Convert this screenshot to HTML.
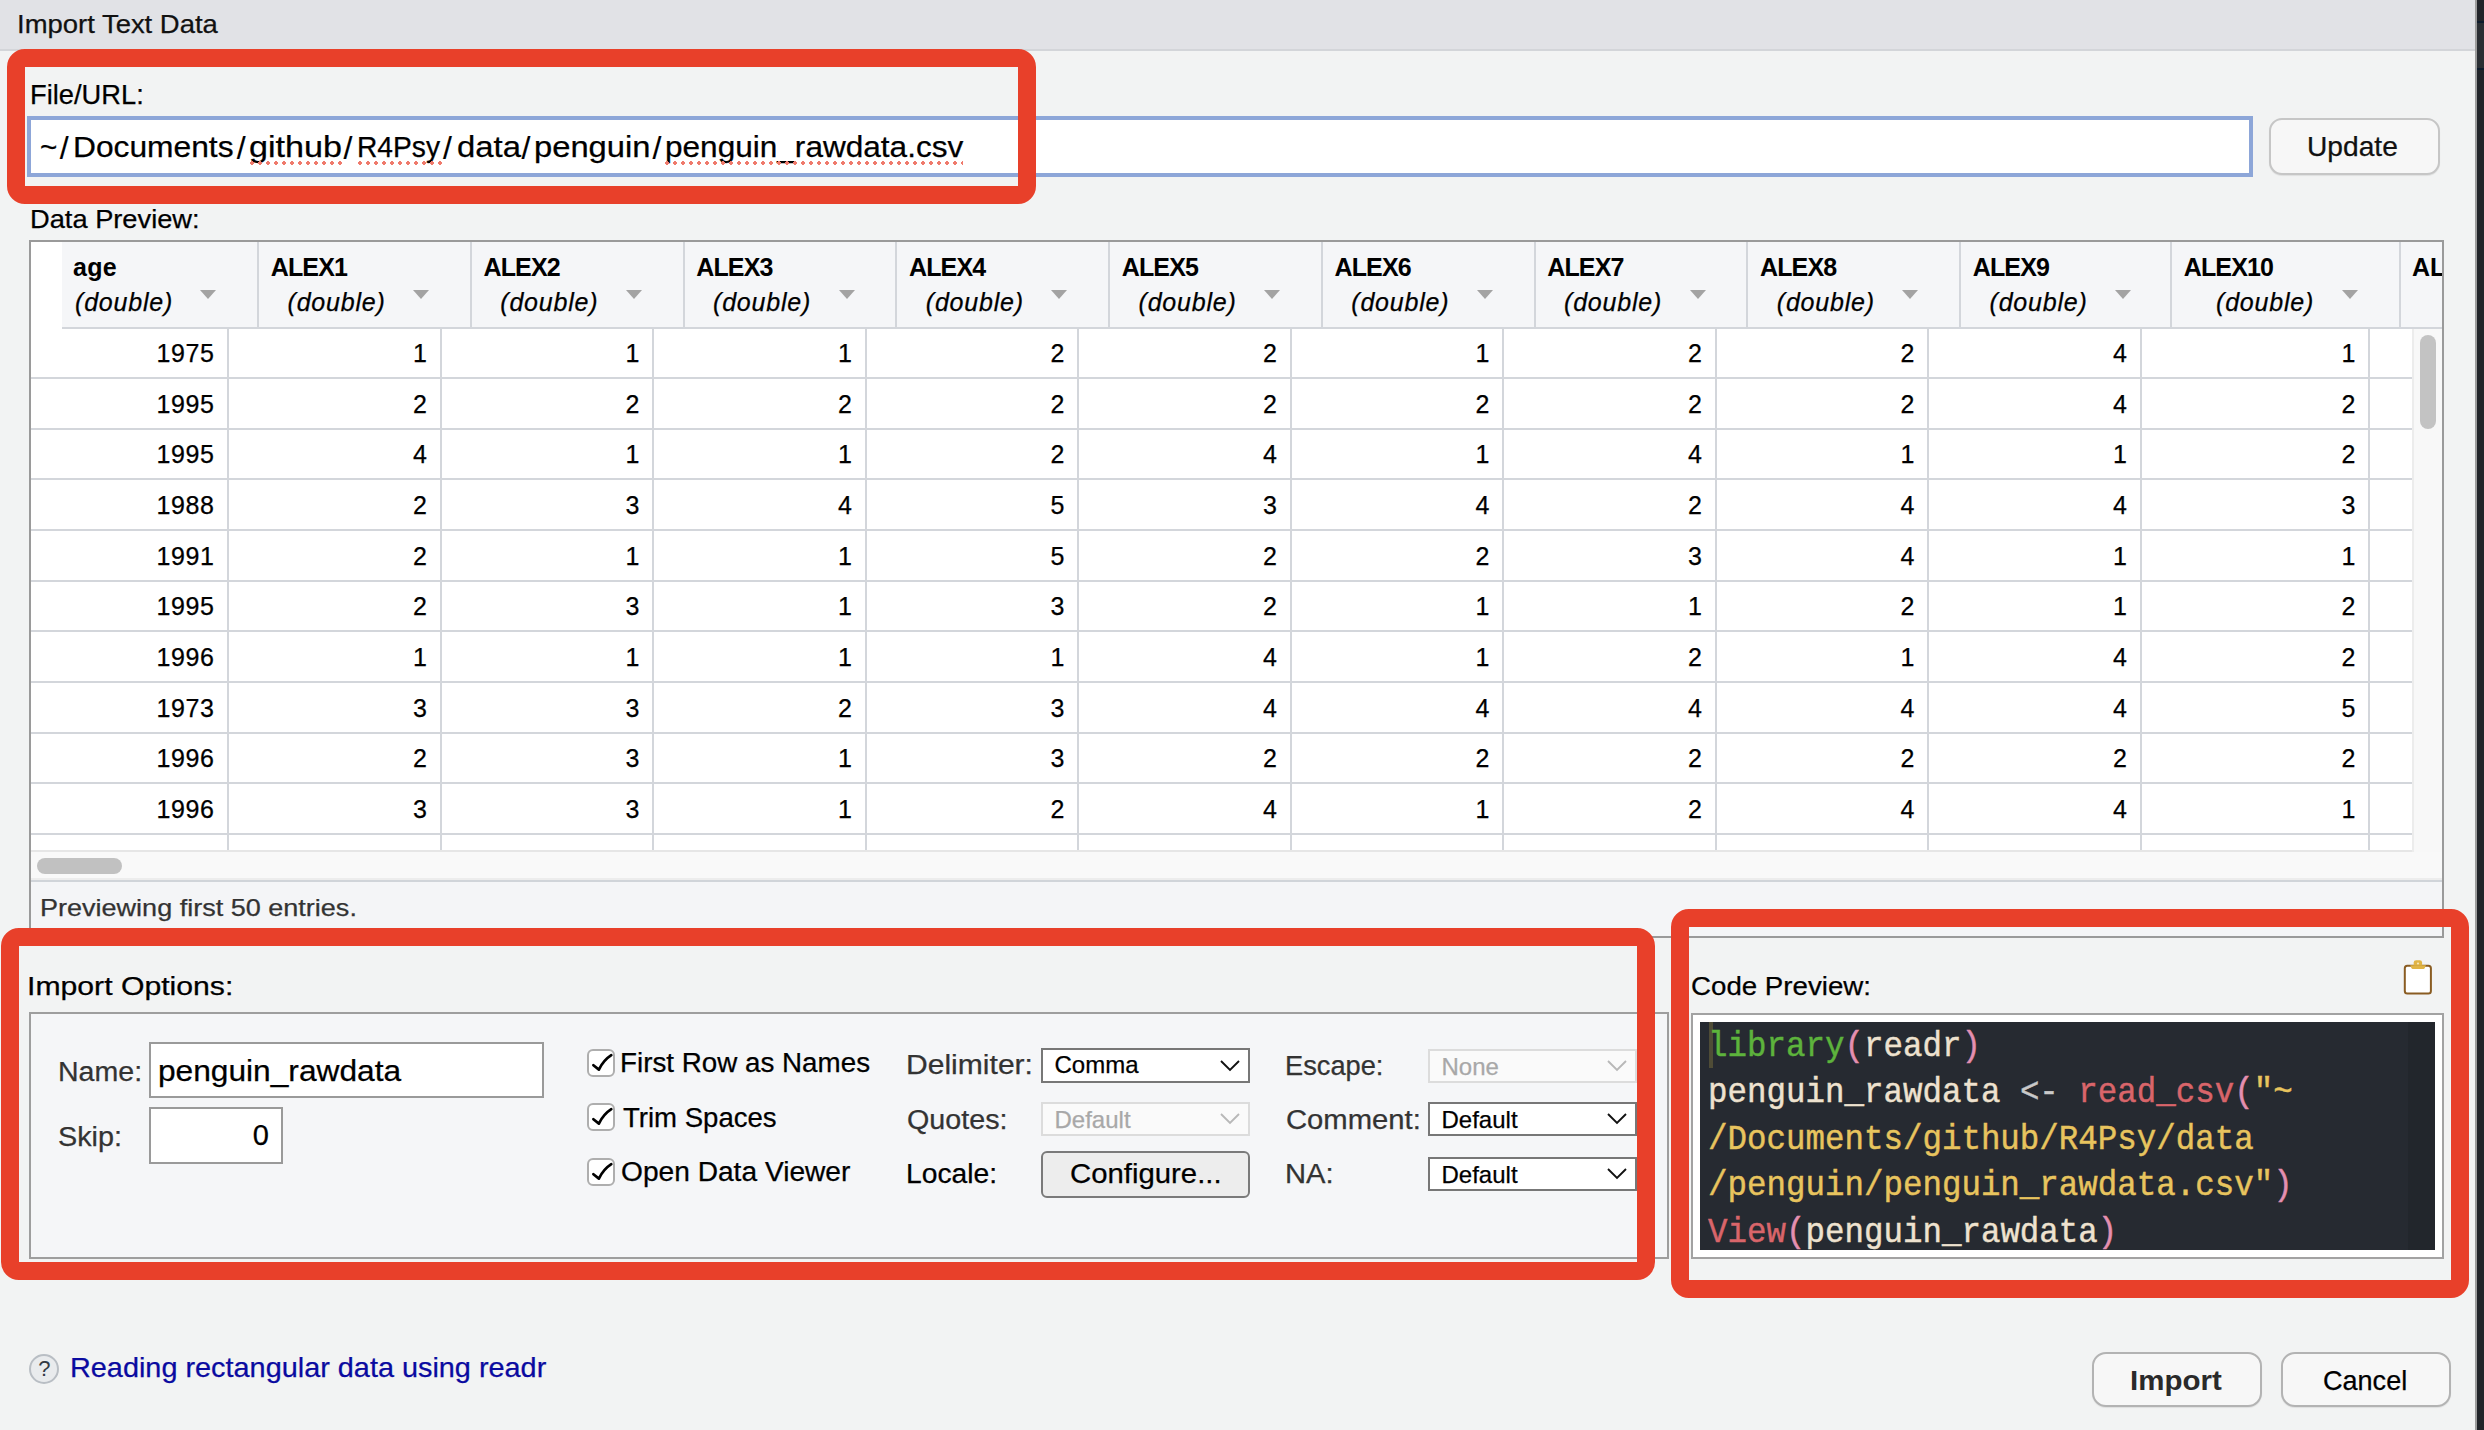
<!DOCTYPE html>
<html><head><meta charset="utf-8"><title>Import Text Data</title>
<style>
html,body{margin:0;padding:0;}
body{width:2484px;height:1430px;overflow:hidden;background:#f2f3f3;position:relative;font-family:'Liberation Sans', sans-serif;}
body div, body svg{position:absolute;white-space:nowrap;}
.t{-webkit-text-stroke:0.35px currentColor;}
body span{position:static;}
</style></head><body>
<div style="left:0px;top:0px;width:2475px;height:49px;background:#e1e2e6"></div>
<div style="left:0px;top:49px;width:2475px;height:2px;background:#d3d5d9"></div>
<div style="left:2475px;top:0px;width:2px;height:1430px;background:#9c9c9c"></div>
<div style="left:2477px;top:0px;width:7px;height:1430px;background:#212429"></div>
<div style="left:2477px;top:21px;width:7px;height:2px;background:#0d1b2c"></div>
<div style="left:2477px;top:23px;width:7px;height:45px;background:#2a2e33"></div>
<div style="left:2477px;top:68px;width:7px;height:2px;background:#0d1b2c"></div>
<div style="left:16.89px;top:11.1px;font-family:'Liberation Sans', sans-serif;font-size:26px;line-height:26px;color:#111;font-weight:normal;letter-spacing:0px;-webkit-text-stroke:0.25px #111;transform:scaleX(1.0556);transform-origin:0 0;">Import Text Data</div>
<div style="left:30.2px;top:80.5px;font-family:'Liberation Sans', sans-serif;font-size:28px;line-height:28px;color:#000;font-weight:normal;letter-spacing:0px;-webkit-text-stroke:0.25px #000;transform:scaleX(0.975);transform-origin:0 0;">File/URL:</div>
<div style="left:27px;top:116px;width:2226px;height:61px;background:#fff;box-sizing:border-box;border:4px solid #8da6d8"></div>
<div style="left:40.08px;top:132.8px;font-family:'Liberation Sans', sans-serif;font-size:29px;line-height:29px;color:#000;font-weight:normal;letter-spacing:0px;-webkit-text-stroke:0.25px #000;transform:scaleX(1.02);transform-origin:0 0;">~</div>
<div style="left:72.51px;top:132.8px;font-family:'Liberation Sans', sans-serif;font-size:29px;line-height:29px;color:#000;font-weight:normal;letter-spacing:0px;-webkit-text-stroke:0.25px #000;transform:scaleX(1.0944);transform-origin:0 0;">Documents</div>
<div style="left:249.22px;top:132.8px;font-family:'Liberation Sans', sans-serif;font-size:29px;line-height:29px;color:#000;font-weight:normal;letter-spacing:0px;-webkit-text-stroke:0.25px #000;transform:scaleX(1.1766);transform-origin:0 0;">github</div>
<div style="left:357.06px;top:132.8px;font-family:'Liberation Sans', sans-serif;font-size:29px;line-height:29px;color:#000;font-weight:normal;letter-spacing:0px;-webkit-text-stroke:0.25px #000;transform:scaleX(0.9714);transform-origin:0 0;">R4Psy</div>
<div style="left:456.57px;top:132.8px;font-family:'Liberation Sans', sans-serif;font-size:29px;line-height:29px;color:#000;font-weight:normal;letter-spacing:0px;-webkit-text-stroke:0.25px #000;transform:scaleX(1.1321);transform-origin:0 0;">data</div>
<div style="left:533.94px;top:132.8px;font-family:'Liberation Sans', sans-serif;font-size:29px;line-height:29px;color:#000;font-weight:normal;letter-spacing:0px;-webkit-text-stroke:0.25px #000;transform:scaleX(1.128);transform-origin:0 0;">penguin</div>
<div style="left:664.82px;top:132.8px;font-family:'Liberation Sans', sans-serif;font-size:29px;line-height:29px;color:#000;font-weight:normal;letter-spacing:0px;-webkit-text-stroke:0.25px #000;transform:scaleX(1.0882);transform-origin:0 0;">penguin_rawdata.csv</div>
<div style="left:59.7px;top:132.3px;font-family:'Liberation Sans', sans-serif;font-size:32px;line-height:32px;color:#000;font-weight:normal;letter-spacing:0px;-webkit-text-stroke:0.15px #000;">/</div>
<div style="left:236.8px;top:132.3px;font-family:'Liberation Sans', sans-serif;font-size:32px;line-height:32px;color:#000;font-weight:normal;letter-spacing:0px;-webkit-text-stroke:0.15px #000;">/</div>
<div style="left:343.5px;top:132.3px;font-family:'Liberation Sans', sans-serif;font-size:32px;line-height:32px;color:#000;font-weight:normal;letter-spacing:0px;-webkit-text-stroke:0.15px #000;">/</div>
<div style="left:443.1px;top:132.3px;font-family:'Liberation Sans', sans-serif;font-size:32px;line-height:32px;color:#000;font-weight:normal;letter-spacing:0px;-webkit-text-stroke:0.15px #000;">/</div>
<div style="left:521.5px;top:132.3px;font-family:'Liberation Sans', sans-serif;font-size:32px;line-height:32px;color:#000;font-weight:normal;letter-spacing:0px;-webkit-text-stroke:0.15px #000;">/</div>
<div style="left:652.5px;top:132.3px;font-family:'Liberation Sans', sans-serif;font-size:32px;line-height:32px;color:#000;font-weight:normal;letter-spacing:0px;-webkit-text-stroke:0.15px #000;">/</div>
<div style="left:250px;top:160.5px;width:92px;height:4px;background-image:radial-gradient(circle at 2px 2px,#ef7a6c 1.6px,transparent 2.1px);background-size:8px 4px;"></div>
<div style="left:358px;top:160.5px;width:84px;height:4px;background-image:radial-gradient(circle at 2px 2px,#ef7a6c 1.6px,transparent 2.1px);background-size:8px 4px;"></div>
<div style="left:665px;top:160.5px;width:298px;height:4px;background-image:radial-gradient(circle at 2px 2px,#ef7a6c 1.6px,transparent 2.1px);background-size:8px 4px;"></div>
<div style="left:2269px;top:118px;width:171px;height:57px;box-sizing:border-box;border:2px solid #c6c6c6;border-radius:13px;background:#f7f7f7;box-shadow:0 1px 1px rgba(0,0,0,0.08)"></div>
<div style="left:2307.49px;top:132.6px;font-family:'Liberation Sans', sans-serif;font-size:28px;line-height:28px;color:#111;font-weight:normal;letter-spacing:0px;-webkit-text-stroke:0.25px #111;transform:scaleX(1.0057);transform-origin:0 0;">Update</div>
<div style="left:29.6px;top:205.6px;font-family:'Liberation Sans', sans-serif;font-size:26px;line-height:26px;color:#000;font-weight:normal;letter-spacing:0px;-webkit-text-stroke:0.25px #000;transform:scaleX(1.048);transform-origin:0 0;">Data Preview:</div>
<div style="left:29px;top:240px;width:2415px;height:698px;background:#f4f5f7;box-sizing:border-box;border:2px solid #9a9a9a"></div>
<div style="left:31px;top:328px;width:2382px;height:522px;background:#fff"></div>
<div style="left:31px;top:242px;width:31px;height:86px;background:#fff"></div>
<div style="left:62px;top:242px;width:2380px;height:85px;background:#f5f6f8"></div>
<div style="left:62px;top:327px;width:2380px;height:2px;background:#d3d6db"></div>
<div style="left:257.00px;top:242px;width:2px;height:86px;background:#d3d6db"></div>
<div style="left:469.75px;top:242px;width:2px;height:86px;background:#d3d6db"></div>
<div style="left:682.50px;top:242px;width:2px;height:86px;background:#d3d6db"></div>
<div style="left:895.25px;top:242px;width:2px;height:86px;background:#d3d6db"></div>
<div style="left:1108.00px;top:242px;width:2px;height:86px;background:#d3d6db"></div>
<div style="left:1320.75px;top:242px;width:2px;height:86px;background:#d3d6db"></div>
<div style="left:1533.50px;top:242px;width:2px;height:86px;background:#d3d6db"></div>
<div style="left:1746.25px;top:242px;width:2px;height:86px;background:#d3d6db"></div>
<div style="left:1959.00px;top:242px;width:2px;height:86px;background:#d3d6db"></div>
<div style="left:2170.00px;top:242px;width:2px;height:86px;background:#d3d6db"></div>
<div style="left:2399.00px;top:242px;width:2px;height:86px;background:#d3d6db"></div>
<div style="left:227.00px;top:329px;width:2px;height:521px;background:#d3d6db"></div>
<div style="left:439.50px;top:329px;width:2px;height:521px;background:#d3d6db"></div>
<div style="left:652.00px;top:329px;width:2px;height:521px;background:#d3d6db"></div>
<div style="left:864.50px;top:329px;width:2px;height:521px;background:#d3d6db"></div>
<div style="left:1077.00px;top:329px;width:2px;height:521px;background:#d3d6db"></div>
<div style="left:1289.50px;top:329px;width:2px;height:521px;background:#d3d6db"></div>
<div style="left:1502.00px;top:329px;width:2px;height:521px;background:#d3d6db"></div>
<div style="left:1714.50px;top:329px;width:2px;height:521px;background:#d3d6db"></div>
<div style="left:1927.00px;top:329px;width:2px;height:521px;background:#d3d6db"></div>
<div style="left:2139.50px;top:329px;width:2px;height:521px;background:#d3d6db"></div>
<div style="left:2368.00px;top:329px;width:2px;height:521px;background:#d3d6db"></div>
<div style="left:31px;top:377.00px;width:2382px;height:2px;background:#d3d6db"></div>
<div style="left:31px;top:427.66px;width:2382px;height:2px;background:#d3d6db"></div>
<div style="left:31px;top:478.32px;width:2382px;height:2px;background:#d3d6db"></div>
<div style="left:31px;top:528.98px;width:2382px;height:2px;background:#d3d6db"></div>
<div style="left:31px;top:579.64px;width:2382px;height:2px;background:#d3d6db"></div>
<div style="left:31px;top:630.30px;width:2382px;height:2px;background:#d3d6db"></div>
<div style="left:31px;top:680.96px;width:2382px;height:2px;background:#d3d6db"></div>
<div style="left:31px;top:731.62px;width:2382px;height:2px;background:#d3d6db"></div>
<div style="left:31px;top:782.28px;width:2382px;height:2px;background:#d3d6db"></div>
<div style="left:31px;top:832.94px;width:2382px;height:2px;background:#d3d6db"></div>
<div style="left:31px;top:850px;width:2382px;height:2px;background:#e6e6e6"></div>
<div style="left:31px;top:852px;width:2411px;height:28px;background:#f9f9f9"></div>
<div style="left:31px;top:878px;width:2411px;height:2px;background:#ededed"></div>
<div style="left:2413px;top:329px;width:29px;height:523px;background:#f8f8f8"></div>
<div style="left:2412px;top:329px;width:2px;height:523px;background:#ececec"></div>
<div style="left:31px;top:880px;width:2411px;height:2px;background:#d0d4d9"></div>
<div style="left:37px;top:858px;width:85px;height:16px;border-radius:8px;background:#c1c1c1"></div>
<div style="left:2420px;top:335px;width:16px;height:94px;border-radius:8px;background:#c3c3c3"></div>
<div style="left:73px;top:254.9px;font-family:'Liberation Sans', sans-serif;font-size:25px;line-height:25px;color:#000;font-weight:bold;letter-spacing:0.3px;">age</div>
<div style="left:75px;top:289.9px;font-family:'Liberation Sans', sans-serif;font-size:25px;line-height:25px;color:#000;font-weight:normal;letter-spacing:0.8px;-webkit-text-stroke:0.25px #000;font-style:italic;">(double)</div>
<div style="left:200.0px;top:290px;width:0;height:0;border-left:8px solid transparent;border-right:8px solid transparent;border-top:9px solid #a3a3a3"></div>
<div style="left:270.7px;top:255.2px;font-family:'Liberation Sans', sans-serif;font-size:25px;line-height:25px;color:#000;font-weight:bold;letter-spacing:-0.85px;">ALEX1</div>
<div style="left:287.5px;top:289.9px;font-family:'Liberation Sans', sans-serif;font-size:25px;line-height:25px;color:#000;font-weight:normal;letter-spacing:0.8px;-webkit-text-stroke:0.25px #000;font-style:italic;">(double)</div>
<div style="left:413.0px;top:290px;width:0;height:0;border-left:8px solid transparent;border-right:8px solid transparent;border-top:9px solid #a3a3a3"></div>
<div style="left:483.45px;top:255.2px;font-family:'Liberation Sans', sans-serif;font-size:25px;line-height:25px;color:#000;font-weight:bold;letter-spacing:-0.85px;">ALEX2</div>
<div style="left:500.25px;top:289.9px;font-family:'Liberation Sans', sans-serif;font-size:25px;line-height:25px;color:#000;font-weight:normal;letter-spacing:0.8px;-webkit-text-stroke:0.25px #000;font-style:italic;">(double)</div>
<div style="left:625.8px;top:290px;width:0;height:0;border-left:8px solid transparent;border-right:8px solid transparent;border-top:9px solid #a3a3a3"></div>
<div style="left:696.2px;top:255.2px;font-family:'Liberation Sans', sans-serif;font-size:25px;line-height:25px;color:#000;font-weight:bold;letter-spacing:-0.85px;">ALEX3</div>
<div style="left:713.0px;top:289.9px;font-family:'Liberation Sans', sans-serif;font-size:25px;line-height:25px;color:#000;font-weight:normal;letter-spacing:0.8px;-webkit-text-stroke:0.25px #000;font-style:italic;">(double)</div>
<div style="left:838.5px;top:290px;width:0;height:0;border-left:8px solid transparent;border-right:8px solid transparent;border-top:9px solid #a3a3a3"></div>
<div style="left:908.95px;top:255.2px;font-family:'Liberation Sans', sans-serif;font-size:25px;line-height:25px;color:#000;font-weight:bold;letter-spacing:-0.85px;">ALEX4</div>
<div style="left:925.75px;top:289.9px;font-family:'Liberation Sans', sans-serif;font-size:25px;line-height:25px;color:#000;font-weight:normal;letter-spacing:0.8px;-webkit-text-stroke:0.25px #000;font-style:italic;">(double)</div>
<div style="left:1051.2px;top:290px;width:0;height:0;border-left:8px solid transparent;border-right:8px solid transparent;border-top:9px solid #a3a3a3"></div>
<div style="left:1121.7px;top:255.2px;font-family:'Liberation Sans', sans-serif;font-size:25px;line-height:25px;color:#000;font-weight:bold;letter-spacing:-0.85px;">ALEX5</div>
<div style="left:1138.5px;top:289.9px;font-family:'Liberation Sans', sans-serif;font-size:25px;line-height:25px;color:#000;font-weight:normal;letter-spacing:0.8px;-webkit-text-stroke:0.25px #000;font-style:italic;">(double)</div>
<div style="left:1264.0px;top:290px;width:0;height:0;border-left:8px solid transparent;border-right:8px solid transparent;border-top:9px solid #a3a3a3"></div>
<div style="left:1334.45px;top:255.2px;font-family:'Liberation Sans', sans-serif;font-size:25px;line-height:25px;color:#000;font-weight:bold;letter-spacing:-0.85px;">ALEX6</div>
<div style="left:1351.25px;top:289.9px;font-family:'Liberation Sans', sans-serif;font-size:25px;line-height:25px;color:#000;font-weight:normal;letter-spacing:0.8px;-webkit-text-stroke:0.25px #000;font-style:italic;">(double)</div>
<div style="left:1476.8px;top:290px;width:0;height:0;border-left:8px solid transparent;border-right:8px solid transparent;border-top:9px solid #a3a3a3"></div>
<div style="left:1547.2px;top:255.2px;font-family:'Liberation Sans', sans-serif;font-size:25px;line-height:25px;color:#000;font-weight:bold;letter-spacing:-0.85px;">ALEX7</div>
<div style="left:1564.0px;top:289.9px;font-family:'Liberation Sans', sans-serif;font-size:25px;line-height:25px;color:#000;font-weight:normal;letter-spacing:0.8px;-webkit-text-stroke:0.25px #000;font-style:italic;">(double)</div>
<div style="left:1689.5px;top:290px;width:0;height:0;border-left:8px solid transparent;border-right:8px solid transparent;border-top:9px solid #a3a3a3"></div>
<div style="left:1759.95px;top:255.2px;font-family:'Liberation Sans', sans-serif;font-size:25px;line-height:25px;color:#000;font-weight:bold;letter-spacing:-0.85px;">ALEX8</div>
<div style="left:1776.75px;top:289.9px;font-family:'Liberation Sans', sans-serif;font-size:25px;line-height:25px;color:#000;font-weight:normal;letter-spacing:0.8px;-webkit-text-stroke:0.25px #000;font-style:italic;">(double)</div>
<div style="left:1902.2px;top:290px;width:0;height:0;border-left:8px solid transparent;border-right:8px solid transparent;border-top:9px solid #a3a3a3"></div>
<div style="left:1972.7px;top:255.2px;font-family:'Liberation Sans', sans-serif;font-size:25px;line-height:25px;color:#000;font-weight:bold;letter-spacing:-0.85px;">ALEX9</div>
<div style="left:1989.5px;top:289.9px;font-family:'Liberation Sans', sans-serif;font-size:25px;line-height:25px;color:#000;font-weight:normal;letter-spacing:0.8px;-webkit-text-stroke:0.25px #000;font-style:italic;">(double)</div>
<div style="left:2115.0px;top:290px;width:0;height:0;border-left:8px solid transparent;border-right:8px solid transparent;border-top:9px solid #a3a3a3"></div>
<div style="left:2183.7px;top:255.2px;font-family:'Liberation Sans', sans-serif;font-size:25px;line-height:25px;color:#000;font-weight:bold;letter-spacing:-0.85px;">ALEX10</div>
<div style="left:2216px;top:289.9px;font-family:'Liberation Sans', sans-serif;font-size:25px;line-height:25px;color:#000;font-weight:normal;letter-spacing:0.8px;-webkit-text-stroke:0.25px #000;font-style:italic;">(double)</div>
<div style="left:2342.0px;top:290px;width:0;height:0;border-left:8px solid transparent;border-right:8px solid transparent;border-top:9px solid #a3a3a3"></div>
<div style="left:2400px;top:242px;width:42px;height:86px;overflow:hidden"><div style="left:12px;top:12.9px;font-family:'Liberation Sans', sans-serif;font-size:25px;line-height:25px;font-weight:bold">ALEX11</div></div>
<div style="right:2269.5px;top:340.9px;font-family:'Liberation Sans', sans-serif;font-size:25px;line-height:25px;color:#000;font-weight:normal;letter-spacing:0.6px;-webkit-text-stroke:0.25px #000;">1975</div>
<div style="right:2057.0px;top:340.9px;font-family:'Liberation Sans', sans-serif;font-size:25px;line-height:25px;color:#000;font-weight:normal;letter-spacing:0px;-webkit-text-stroke:0.25px #000;">1</div>
<div style="right:1844.5px;top:340.9px;font-family:'Liberation Sans', sans-serif;font-size:25px;line-height:25px;color:#000;font-weight:normal;letter-spacing:0px;-webkit-text-stroke:0.25px #000;">1</div>
<div style="right:1632.0px;top:340.9px;font-family:'Liberation Sans', sans-serif;font-size:25px;line-height:25px;color:#000;font-weight:normal;letter-spacing:0px;-webkit-text-stroke:0.25px #000;">1</div>
<div style="right:1419.5px;top:340.9px;font-family:'Liberation Sans', sans-serif;font-size:25px;line-height:25px;color:#000;font-weight:normal;letter-spacing:0px;-webkit-text-stroke:0.25px #000;">2</div>
<div style="right:1207.0px;top:340.9px;font-family:'Liberation Sans', sans-serif;font-size:25px;line-height:25px;color:#000;font-weight:normal;letter-spacing:0px;-webkit-text-stroke:0.25px #000;">2</div>
<div style="right:994.5px;top:340.9px;font-family:'Liberation Sans', sans-serif;font-size:25px;line-height:25px;color:#000;font-weight:normal;letter-spacing:0px;-webkit-text-stroke:0.25px #000;">1</div>
<div style="right:782.0px;top:340.9px;font-family:'Liberation Sans', sans-serif;font-size:25px;line-height:25px;color:#000;font-weight:normal;letter-spacing:0px;-webkit-text-stroke:0.25px #000;">2</div>
<div style="right:569.5px;top:340.9px;font-family:'Liberation Sans', sans-serif;font-size:25px;line-height:25px;color:#000;font-weight:normal;letter-spacing:0px;-webkit-text-stroke:0.25px #000;">2</div>
<div style="right:357.0px;top:340.9px;font-family:'Liberation Sans', sans-serif;font-size:25px;line-height:25px;color:#000;font-weight:normal;letter-spacing:0px;-webkit-text-stroke:0.25px #000;">4</div>
<div style="right:128.5px;top:340.9px;font-family:'Liberation Sans', sans-serif;font-size:25px;line-height:25px;color:#000;font-weight:normal;letter-spacing:0px;-webkit-text-stroke:0.25px #000;">1</div>
<div style="right:2269.5px;top:391.6px;font-family:'Liberation Sans', sans-serif;font-size:25px;line-height:25px;color:#000;font-weight:normal;letter-spacing:0.6px;-webkit-text-stroke:0.25px #000;">1995</div>
<div style="right:2057.0px;top:391.6px;font-family:'Liberation Sans', sans-serif;font-size:25px;line-height:25px;color:#000;font-weight:normal;letter-spacing:0px;-webkit-text-stroke:0.25px #000;">2</div>
<div style="right:1844.5px;top:391.6px;font-family:'Liberation Sans', sans-serif;font-size:25px;line-height:25px;color:#000;font-weight:normal;letter-spacing:0px;-webkit-text-stroke:0.25px #000;">2</div>
<div style="right:1632.0px;top:391.6px;font-family:'Liberation Sans', sans-serif;font-size:25px;line-height:25px;color:#000;font-weight:normal;letter-spacing:0px;-webkit-text-stroke:0.25px #000;">2</div>
<div style="right:1419.5px;top:391.6px;font-family:'Liberation Sans', sans-serif;font-size:25px;line-height:25px;color:#000;font-weight:normal;letter-spacing:0px;-webkit-text-stroke:0.25px #000;">2</div>
<div style="right:1207.0px;top:391.6px;font-family:'Liberation Sans', sans-serif;font-size:25px;line-height:25px;color:#000;font-weight:normal;letter-spacing:0px;-webkit-text-stroke:0.25px #000;">2</div>
<div style="right:994.5px;top:391.6px;font-family:'Liberation Sans', sans-serif;font-size:25px;line-height:25px;color:#000;font-weight:normal;letter-spacing:0px;-webkit-text-stroke:0.25px #000;">2</div>
<div style="right:782.0px;top:391.6px;font-family:'Liberation Sans', sans-serif;font-size:25px;line-height:25px;color:#000;font-weight:normal;letter-spacing:0px;-webkit-text-stroke:0.25px #000;">2</div>
<div style="right:569.5px;top:391.6px;font-family:'Liberation Sans', sans-serif;font-size:25px;line-height:25px;color:#000;font-weight:normal;letter-spacing:0px;-webkit-text-stroke:0.25px #000;">2</div>
<div style="right:357.0px;top:391.6px;font-family:'Liberation Sans', sans-serif;font-size:25px;line-height:25px;color:#000;font-weight:normal;letter-spacing:0px;-webkit-text-stroke:0.25px #000;">4</div>
<div style="right:128.5px;top:391.6px;font-family:'Liberation Sans', sans-serif;font-size:25px;line-height:25px;color:#000;font-weight:normal;letter-spacing:0px;-webkit-text-stroke:0.25px #000;">2</div>
<div style="right:2269.5px;top:442.3px;font-family:'Liberation Sans', sans-serif;font-size:25px;line-height:25px;color:#000;font-weight:normal;letter-spacing:0.6px;-webkit-text-stroke:0.25px #000;">1995</div>
<div style="right:2057.0px;top:442.3px;font-family:'Liberation Sans', sans-serif;font-size:25px;line-height:25px;color:#000;font-weight:normal;letter-spacing:0px;-webkit-text-stroke:0.25px #000;">4</div>
<div style="right:1844.5px;top:442.3px;font-family:'Liberation Sans', sans-serif;font-size:25px;line-height:25px;color:#000;font-weight:normal;letter-spacing:0px;-webkit-text-stroke:0.25px #000;">1</div>
<div style="right:1632.0px;top:442.3px;font-family:'Liberation Sans', sans-serif;font-size:25px;line-height:25px;color:#000;font-weight:normal;letter-spacing:0px;-webkit-text-stroke:0.25px #000;">1</div>
<div style="right:1419.5px;top:442.3px;font-family:'Liberation Sans', sans-serif;font-size:25px;line-height:25px;color:#000;font-weight:normal;letter-spacing:0px;-webkit-text-stroke:0.25px #000;">2</div>
<div style="right:1207.0px;top:442.3px;font-family:'Liberation Sans', sans-serif;font-size:25px;line-height:25px;color:#000;font-weight:normal;letter-spacing:0px;-webkit-text-stroke:0.25px #000;">4</div>
<div style="right:994.5px;top:442.3px;font-family:'Liberation Sans', sans-serif;font-size:25px;line-height:25px;color:#000;font-weight:normal;letter-spacing:0px;-webkit-text-stroke:0.25px #000;">1</div>
<div style="right:782.0px;top:442.3px;font-family:'Liberation Sans', sans-serif;font-size:25px;line-height:25px;color:#000;font-weight:normal;letter-spacing:0px;-webkit-text-stroke:0.25px #000;">4</div>
<div style="right:569.5px;top:442.3px;font-family:'Liberation Sans', sans-serif;font-size:25px;line-height:25px;color:#000;font-weight:normal;letter-spacing:0px;-webkit-text-stroke:0.25px #000;">1</div>
<div style="right:357.0px;top:442.3px;font-family:'Liberation Sans', sans-serif;font-size:25px;line-height:25px;color:#000;font-weight:normal;letter-spacing:0px;-webkit-text-stroke:0.25px #000;">1</div>
<div style="right:128.5px;top:442.3px;font-family:'Liberation Sans', sans-serif;font-size:25px;line-height:25px;color:#000;font-weight:normal;letter-spacing:0px;-webkit-text-stroke:0.25px #000;">2</div>
<div style="right:2269.5px;top:492.9px;font-family:'Liberation Sans', sans-serif;font-size:25px;line-height:25px;color:#000;font-weight:normal;letter-spacing:0.6px;-webkit-text-stroke:0.25px #000;">1988</div>
<div style="right:2057.0px;top:492.9px;font-family:'Liberation Sans', sans-serif;font-size:25px;line-height:25px;color:#000;font-weight:normal;letter-spacing:0px;-webkit-text-stroke:0.25px #000;">2</div>
<div style="right:1844.5px;top:492.9px;font-family:'Liberation Sans', sans-serif;font-size:25px;line-height:25px;color:#000;font-weight:normal;letter-spacing:0px;-webkit-text-stroke:0.25px #000;">3</div>
<div style="right:1632.0px;top:492.9px;font-family:'Liberation Sans', sans-serif;font-size:25px;line-height:25px;color:#000;font-weight:normal;letter-spacing:0px;-webkit-text-stroke:0.25px #000;">4</div>
<div style="right:1419.5px;top:492.9px;font-family:'Liberation Sans', sans-serif;font-size:25px;line-height:25px;color:#000;font-weight:normal;letter-spacing:0px;-webkit-text-stroke:0.25px #000;">5</div>
<div style="right:1207.0px;top:492.9px;font-family:'Liberation Sans', sans-serif;font-size:25px;line-height:25px;color:#000;font-weight:normal;letter-spacing:0px;-webkit-text-stroke:0.25px #000;">3</div>
<div style="right:994.5px;top:492.9px;font-family:'Liberation Sans', sans-serif;font-size:25px;line-height:25px;color:#000;font-weight:normal;letter-spacing:0px;-webkit-text-stroke:0.25px #000;">4</div>
<div style="right:782.0px;top:492.9px;font-family:'Liberation Sans', sans-serif;font-size:25px;line-height:25px;color:#000;font-weight:normal;letter-spacing:0px;-webkit-text-stroke:0.25px #000;">2</div>
<div style="right:569.5px;top:492.9px;font-family:'Liberation Sans', sans-serif;font-size:25px;line-height:25px;color:#000;font-weight:normal;letter-spacing:0px;-webkit-text-stroke:0.25px #000;">4</div>
<div style="right:357.0px;top:492.9px;font-family:'Liberation Sans', sans-serif;font-size:25px;line-height:25px;color:#000;font-weight:normal;letter-spacing:0px;-webkit-text-stroke:0.25px #000;">4</div>
<div style="right:128.5px;top:492.9px;font-family:'Liberation Sans', sans-serif;font-size:25px;line-height:25px;color:#000;font-weight:normal;letter-spacing:0px;-webkit-text-stroke:0.25px #000;">3</div>
<div style="right:2269.5px;top:543.6px;font-family:'Liberation Sans', sans-serif;font-size:25px;line-height:25px;color:#000;font-weight:normal;letter-spacing:0.6px;-webkit-text-stroke:0.25px #000;">1991</div>
<div style="right:2057.0px;top:543.6px;font-family:'Liberation Sans', sans-serif;font-size:25px;line-height:25px;color:#000;font-weight:normal;letter-spacing:0px;-webkit-text-stroke:0.25px #000;">2</div>
<div style="right:1844.5px;top:543.6px;font-family:'Liberation Sans', sans-serif;font-size:25px;line-height:25px;color:#000;font-weight:normal;letter-spacing:0px;-webkit-text-stroke:0.25px #000;">1</div>
<div style="right:1632.0px;top:543.6px;font-family:'Liberation Sans', sans-serif;font-size:25px;line-height:25px;color:#000;font-weight:normal;letter-spacing:0px;-webkit-text-stroke:0.25px #000;">1</div>
<div style="right:1419.5px;top:543.6px;font-family:'Liberation Sans', sans-serif;font-size:25px;line-height:25px;color:#000;font-weight:normal;letter-spacing:0px;-webkit-text-stroke:0.25px #000;">5</div>
<div style="right:1207.0px;top:543.6px;font-family:'Liberation Sans', sans-serif;font-size:25px;line-height:25px;color:#000;font-weight:normal;letter-spacing:0px;-webkit-text-stroke:0.25px #000;">2</div>
<div style="right:994.5px;top:543.6px;font-family:'Liberation Sans', sans-serif;font-size:25px;line-height:25px;color:#000;font-weight:normal;letter-spacing:0px;-webkit-text-stroke:0.25px #000;">2</div>
<div style="right:782.0px;top:543.6px;font-family:'Liberation Sans', sans-serif;font-size:25px;line-height:25px;color:#000;font-weight:normal;letter-spacing:0px;-webkit-text-stroke:0.25px #000;">3</div>
<div style="right:569.5px;top:543.6px;font-family:'Liberation Sans', sans-serif;font-size:25px;line-height:25px;color:#000;font-weight:normal;letter-spacing:0px;-webkit-text-stroke:0.25px #000;">4</div>
<div style="right:357.0px;top:543.6px;font-family:'Liberation Sans', sans-serif;font-size:25px;line-height:25px;color:#000;font-weight:normal;letter-spacing:0px;-webkit-text-stroke:0.25px #000;">1</div>
<div style="right:128.5px;top:543.6px;font-family:'Liberation Sans', sans-serif;font-size:25px;line-height:25px;color:#000;font-weight:normal;letter-spacing:0px;-webkit-text-stroke:0.25px #000;">1</div>
<div style="right:2269.5px;top:594.2px;font-family:'Liberation Sans', sans-serif;font-size:25px;line-height:25px;color:#000;font-weight:normal;letter-spacing:0.6px;-webkit-text-stroke:0.25px #000;">1995</div>
<div style="right:2057.0px;top:594.2px;font-family:'Liberation Sans', sans-serif;font-size:25px;line-height:25px;color:#000;font-weight:normal;letter-spacing:0px;-webkit-text-stroke:0.25px #000;">2</div>
<div style="right:1844.5px;top:594.2px;font-family:'Liberation Sans', sans-serif;font-size:25px;line-height:25px;color:#000;font-weight:normal;letter-spacing:0px;-webkit-text-stroke:0.25px #000;">3</div>
<div style="right:1632.0px;top:594.2px;font-family:'Liberation Sans', sans-serif;font-size:25px;line-height:25px;color:#000;font-weight:normal;letter-spacing:0px;-webkit-text-stroke:0.25px #000;">1</div>
<div style="right:1419.5px;top:594.2px;font-family:'Liberation Sans', sans-serif;font-size:25px;line-height:25px;color:#000;font-weight:normal;letter-spacing:0px;-webkit-text-stroke:0.25px #000;">3</div>
<div style="right:1207.0px;top:594.2px;font-family:'Liberation Sans', sans-serif;font-size:25px;line-height:25px;color:#000;font-weight:normal;letter-spacing:0px;-webkit-text-stroke:0.25px #000;">2</div>
<div style="right:994.5px;top:594.2px;font-family:'Liberation Sans', sans-serif;font-size:25px;line-height:25px;color:#000;font-weight:normal;letter-spacing:0px;-webkit-text-stroke:0.25px #000;">1</div>
<div style="right:782.0px;top:594.2px;font-family:'Liberation Sans', sans-serif;font-size:25px;line-height:25px;color:#000;font-weight:normal;letter-spacing:0px;-webkit-text-stroke:0.25px #000;">1</div>
<div style="right:569.5px;top:594.2px;font-family:'Liberation Sans', sans-serif;font-size:25px;line-height:25px;color:#000;font-weight:normal;letter-spacing:0px;-webkit-text-stroke:0.25px #000;">2</div>
<div style="right:357.0px;top:594.2px;font-family:'Liberation Sans', sans-serif;font-size:25px;line-height:25px;color:#000;font-weight:normal;letter-spacing:0px;-webkit-text-stroke:0.25px #000;">1</div>
<div style="right:128.5px;top:594.2px;font-family:'Liberation Sans', sans-serif;font-size:25px;line-height:25px;color:#000;font-weight:normal;letter-spacing:0px;-webkit-text-stroke:0.25px #000;">2</div>
<div style="right:2269.5px;top:644.9px;font-family:'Liberation Sans', sans-serif;font-size:25px;line-height:25px;color:#000;font-weight:normal;letter-spacing:0.6px;-webkit-text-stroke:0.25px #000;">1996</div>
<div style="right:2057.0px;top:644.9px;font-family:'Liberation Sans', sans-serif;font-size:25px;line-height:25px;color:#000;font-weight:normal;letter-spacing:0px;-webkit-text-stroke:0.25px #000;">1</div>
<div style="right:1844.5px;top:644.9px;font-family:'Liberation Sans', sans-serif;font-size:25px;line-height:25px;color:#000;font-weight:normal;letter-spacing:0px;-webkit-text-stroke:0.25px #000;">1</div>
<div style="right:1632.0px;top:644.9px;font-family:'Liberation Sans', sans-serif;font-size:25px;line-height:25px;color:#000;font-weight:normal;letter-spacing:0px;-webkit-text-stroke:0.25px #000;">1</div>
<div style="right:1419.5px;top:644.9px;font-family:'Liberation Sans', sans-serif;font-size:25px;line-height:25px;color:#000;font-weight:normal;letter-spacing:0px;-webkit-text-stroke:0.25px #000;">1</div>
<div style="right:1207.0px;top:644.9px;font-family:'Liberation Sans', sans-serif;font-size:25px;line-height:25px;color:#000;font-weight:normal;letter-spacing:0px;-webkit-text-stroke:0.25px #000;">4</div>
<div style="right:994.5px;top:644.9px;font-family:'Liberation Sans', sans-serif;font-size:25px;line-height:25px;color:#000;font-weight:normal;letter-spacing:0px;-webkit-text-stroke:0.25px #000;">1</div>
<div style="right:782.0px;top:644.9px;font-family:'Liberation Sans', sans-serif;font-size:25px;line-height:25px;color:#000;font-weight:normal;letter-spacing:0px;-webkit-text-stroke:0.25px #000;">2</div>
<div style="right:569.5px;top:644.9px;font-family:'Liberation Sans', sans-serif;font-size:25px;line-height:25px;color:#000;font-weight:normal;letter-spacing:0px;-webkit-text-stroke:0.25px #000;">1</div>
<div style="right:357.0px;top:644.9px;font-family:'Liberation Sans', sans-serif;font-size:25px;line-height:25px;color:#000;font-weight:normal;letter-spacing:0px;-webkit-text-stroke:0.25px #000;">4</div>
<div style="right:128.5px;top:644.9px;font-family:'Liberation Sans', sans-serif;font-size:25px;line-height:25px;color:#000;font-weight:normal;letter-spacing:0px;-webkit-text-stroke:0.25px #000;">2</div>
<div style="right:2269.5px;top:695.6px;font-family:'Liberation Sans', sans-serif;font-size:25px;line-height:25px;color:#000;font-weight:normal;letter-spacing:0.6px;-webkit-text-stroke:0.25px #000;">1973</div>
<div style="right:2057.0px;top:695.6px;font-family:'Liberation Sans', sans-serif;font-size:25px;line-height:25px;color:#000;font-weight:normal;letter-spacing:0px;-webkit-text-stroke:0.25px #000;">3</div>
<div style="right:1844.5px;top:695.6px;font-family:'Liberation Sans', sans-serif;font-size:25px;line-height:25px;color:#000;font-weight:normal;letter-spacing:0px;-webkit-text-stroke:0.25px #000;">3</div>
<div style="right:1632.0px;top:695.6px;font-family:'Liberation Sans', sans-serif;font-size:25px;line-height:25px;color:#000;font-weight:normal;letter-spacing:0px;-webkit-text-stroke:0.25px #000;">2</div>
<div style="right:1419.5px;top:695.6px;font-family:'Liberation Sans', sans-serif;font-size:25px;line-height:25px;color:#000;font-weight:normal;letter-spacing:0px;-webkit-text-stroke:0.25px #000;">3</div>
<div style="right:1207.0px;top:695.6px;font-family:'Liberation Sans', sans-serif;font-size:25px;line-height:25px;color:#000;font-weight:normal;letter-spacing:0px;-webkit-text-stroke:0.25px #000;">4</div>
<div style="right:994.5px;top:695.6px;font-family:'Liberation Sans', sans-serif;font-size:25px;line-height:25px;color:#000;font-weight:normal;letter-spacing:0px;-webkit-text-stroke:0.25px #000;">4</div>
<div style="right:782.0px;top:695.6px;font-family:'Liberation Sans', sans-serif;font-size:25px;line-height:25px;color:#000;font-weight:normal;letter-spacing:0px;-webkit-text-stroke:0.25px #000;">4</div>
<div style="right:569.5px;top:695.6px;font-family:'Liberation Sans', sans-serif;font-size:25px;line-height:25px;color:#000;font-weight:normal;letter-spacing:0px;-webkit-text-stroke:0.25px #000;">4</div>
<div style="right:357.0px;top:695.6px;font-family:'Liberation Sans', sans-serif;font-size:25px;line-height:25px;color:#000;font-weight:normal;letter-spacing:0px;-webkit-text-stroke:0.25px #000;">4</div>
<div style="right:128.5px;top:695.6px;font-family:'Liberation Sans', sans-serif;font-size:25px;line-height:25px;color:#000;font-weight:normal;letter-spacing:0px;-webkit-text-stroke:0.25px #000;">5</div>
<div style="right:2269.5px;top:746.2px;font-family:'Liberation Sans', sans-serif;font-size:25px;line-height:25px;color:#000;font-weight:normal;letter-spacing:0.6px;-webkit-text-stroke:0.25px #000;">1996</div>
<div style="right:2057.0px;top:746.2px;font-family:'Liberation Sans', sans-serif;font-size:25px;line-height:25px;color:#000;font-weight:normal;letter-spacing:0px;-webkit-text-stroke:0.25px #000;">2</div>
<div style="right:1844.5px;top:746.2px;font-family:'Liberation Sans', sans-serif;font-size:25px;line-height:25px;color:#000;font-weight:normal;letter-spacing:0px;-webkit-text-stroke:0.25px #000;">3</div>
<div style="right:1632.0px;top:746.2px;font-family:'Liberation Sans', sans-serif;font-size:25px;line-height:25px;color:#000;font-weight:normal;letter-spacing:0px;-webkit-text-stroke:0.25px #000;">1</div>
<div style="right:1419.5px;top:746.2px;font-family:'Liberation Sans', sans-serif;font-size:25px;line-height:25px;color:#000;font-weight:normal;letter-spacing:0px;-webkit-text-stroke:0.25px #000;">3</div>
<div style="right:1207.0px;top:746.2px;font-family:'Liberation Sans', sans-serif;font-size:25px;line-height:25px;color:#000;font-weight:normal;letter-spacing:0px;-webkit-text-stroke:0.25px #000;">2</div>
<div style="right:994.5px;top:746.2px;font-family:'Liberation Sans', sans-serif;font-size:25px;line-height:25px;color:#000;font-weight:normal;letter-spacing:0px;-webkit-text-stroke:0.25px #000;">2</div>
<div style="right:782.0px;top:746.2px;font-family:'Liberation Sans', sans-serif;font-size:25px;line-height:25px;color:#000;font-weight:normal;letter-spacing:0px;-webkit-text-stroke:0.25px #000;">2</div>
<div style="right:569.5px;top:746.2px;font-family:'Liberation Sans', sans-serif;font-size:25px;line-height:25px;color:#000;font-weight:normal;letter-spacing:0px;-webkit-text-stroke:0.25px #000;">2</div>
<div style="right:357.0px;top:746.2px;font-family:'Liberation Sans', sans-serif;font-size:25px;line-height:25px;color:#000;font-weight:normal;letter-spacing:0px;-webkit-text-stroke:0.25px #000;">2</div>
<div style="right:128.5px;top:746.2px;font-family:'Liberation Sans', sans-serif;font-size:25px;line-height:25px;color:#000;font-weight:normal;letter-spacing:0px;-webkit-text-stroke:0.25px #000;">2</div>
<div style="right:2269.5px;top:796.9px;font-family:'Liberation Sans', sans-serif;font-size:25px;line-height:25px;color:#000;font-weight:normal;letter-spacing:0.6px;-webkit-text-stroke:0.25px #000;">1996</div>
<div style="right:2057.0px;top:796.9px;font-family:'Liberation Sans', sans-serif;font-size:25px;line-height:25px;color:#000;font-weight:normal;letter-spacing:0px;-webkit-text-stroke:0.25px #000;">3</div>
<div style="right:1844.5px;top:796.9px;font-family:'Liberation Sans', sans-serif;font-size:25px;line-height:25px;color:#000;font-weight:normal;letter-spacing:0px;-webkit-text-stroke:0.25px #000;">3</div>
<div style="right:1632.0px;top:796.9px;font-family:'Liberation Sans', sans-serif;font-size:25px;line-height:25px;color:#000;font-weight:normal;letter-spacing:0px;-webkit-text-stroke:0.25px #000;">1</div>
<div style="right:1419.5px;top:796.9px;font-family:'Liberation Sans', sans-serif;font-size:25px;line-height:25px;color:#000;font-weight:normal;letter-spacing:0px;-webkit-text-stroke:0.25px #000;">2</div>
<div style="right:1207.0px;top:796.9px;font-family:'Liberation Sans', sans-serif;font-size:25px;line-height:25px;color:#000;font-weight:normal;letter-spacing:0px;-webkit-text-stroke:0.25px #000;">4</div>
<div style="right:994.5px;top:796.9px;font-family:'Liberation Sans', sans-serif;font-size:25px;line-height:25px;color:#000;font-weight:normal;letter-spacing:0px;-webkit-text-stroke:0.25px #000;">1</div>
<div style="right:782.0px;top:796.9px;font-family:'Liberation Sans', sans-serif;font-size:25px;line-height:25px;color:#000;font-weight:normal;letter-spacing:0px;-webkit-text-stroke:0.25px #000;">2</div>
<div style="right:569.5px;top:796.9px;font-family:'Liberation Sans', sans-serif;font-size:25px;line-height:25px;color:#000;font-weight:normal;letter-spacing:0px;-webkit-text-stroke:0.25px #000;">4</div>
<div style="right:357.0px;top:796.9px;font-family:'Liberation Sans', sans-serif;font-size:25px;line-height:25px;color:#000;font-weight:normal;letter-spacing:0px;-webkit-text-stroke:0.25px #000;">4</div>
<div style="right:128.5px;top:796.9px;font-family:'Liberation Sans', sans-serif;font-size:25px;line-height:25px;color:#000;font-weight:normal;letter-spacing:0px;-webkit-text-stroke:0.25px #000;">1</div>
<div style="left:39.75px;top:895.6px;font-family:'Liberation Sans', sans-serif;font-size:24px;line-height:24px;color:#333;font-weight:normal;letter-spacing:0px;-webkit-text-stroke:0.25px #333;transform:scaleX(1.1259);transform-origin:0 0;">Previewing first 50 entries.</div>
<div style="left:26.68px;top:972.7px;font-family:'Liberation Sans', sans-serif;font-size:26px;line-height:26px;color:#000;font-weight:normal;letter-spacing:0px;-webkit-text-stroke:0.25px #000;transform:scaleX(1.1609);transform-origin:0 0;">Import Options:</div>
<div style="left:29px;top:1012px;width:1640px;height:246.5px;background:#f5f6f8;box-sizing:border-box;border:2px solid #9e9e9e"></div>
<div style="left:57.59px;top:1058.5px;font-family:'Liberation Sans', sans-serif;font-size:27px;line-height:27px;color:#333;font-weight:normal;letter-spacing:0px;-webkit-text-stroke:0.25px #333;transform:scaleX(1.0573);transform-origin:0 0;">Name:</div>
<div style="left:149px;top:1042px;width:395px;height:56px;background:#fff;box-sizing:border-box;border:2px solid #9a9a9a"></div>
<div style="left:158.42px;top:1057.3px;font-family:'Liberation Sans', sans-serif;font-size:29px;line-height:29px;color:#000;font-weight:normal;letter-spacing:0px;-webkit-text-stroke:0.25px #000;transform:scaleX(1.0923);transform-origin:0 0;">penguin_rawdata</div>
<div style="left:58.13px;top:1123.5px;font-family:'Liberation Sans', sans-serif;font-size:27px;line-height:27px;color:#333;font-weight:normal;letter-spacing:0px;-webkit-text-stroke:0.25px #333;transform:scaleX(1.0667);transform-origin:0 0;">Skip:</div>
<div style="left:149px;top:1107px;width:134px;height:57px;background:#fff;box-sizing:border-box;border:2px solid #9a9a9a"></div>
<div style="right:2215px;top:1121.3px;font-family:'Liberation Sans', sans-serif;font-size:29px;line-height:29px;color:#000;font-weight:normal;letter-spacing:0px;-webkit-text-stroke:0.25px #000;">0</div>
<div style="left:587px;top:1049.0px;width:27.5px;height:27.5px;box-sizing:border-box;border:2px solid #aeaeae;border-radius:6px;background:#fff"></div>
<svg style="left:587px;top:1049.0px" width="27" height="27" viewBox="0 0 27 27"><path d="M6.4 16.2 L11.9 20.6 Q16.5 11.2 24.3 6.2" fill="none" stroke="#000" stroke-width="2.7" stroke-linecap="round" stroke-linejoin="round"/></svg>
<div style="left:620.44px;top:1049.6px;font-family:'Liberation Sans', sans-serif;font-size:27px;line-height:27px;color:#000;font-weight:normal;letter-spacing:0px;-webkit-text-stroke:0.25px #000;transform:scaleX(1.0287);transform-origin:0 0;">First Row as Names</div>
<div style="left:587px;top:1103.2px;width:27.5px;height:27.5px;box-sizing:border-box;border:2px solid #aeaeae;border-radius:6px;background:#fff"></div>
<svg style="left:587px;top:1103.2px" width="27" height="27" viewBox="0 0 27 27"><path d="M6.4 16.2 L11.9 20.6 Q16.5 11.2 24.3 6.2" fill="none" stroke="#000" stroke-width="2.7" stroke-linecap="round" stroke-linejoin="round"/></svg>
<div style="left:622.5px;top:1104.5px;font-family:'Liberation Sans', sans-serif;font-size:27px;line-height:27px;color:#000;font-weight:normal;letter-spacing:0px;-webkit-text-stroke:0.25px #000;transform:scaleX(1.0207);transform-origin:0 0;">Trim Spaces</div>
<div style="left:587px;top:1158.1px;width:27.5px;height:27.5px;box-sizing:border-box;border:2px solid #aeaeae;border-radius:6px;background:#fff"></div>
<svg style="left:587px;top:1158.1px" width="27" height="27" viewBox="0 0 27 27"><path d="M6.4 16.2 L11.9 20.6 Q16.5 11.2 24.3 6.2" fill="none" stroke="#000" stroke-width="2.7" stroke-linecap="round" stroke-linejoin="round"/></svg>
<div style="left:620.96px;top:1158.8px;font-family:'Liberation Sans', sans-serif;font-size:27px;line-height:27px;color:#000;font-weight:normal;letter-spacing:0px;-webkit-text-stroke:0.25px #000;transform:scaleX(1.042);transform-origin:0 0;">Open Data Viewer</div>
<div style="left:906.27px;top:1052.2px;font-family:'Liberation Sans', sans-serif;font-size:27px;line-height:27px;color:#333;font-weight:normal;letter-spacing:0px;-webkit-text-stroke:0.25px #333;transform:scaleX(1.1136);transform-origin:0 0;">Delimiter:</div>
<div style="left:907.44px;top:1106.5px;font-family:'Liberation Sans', sans-serif;font-size:27px;line-height:27px;color:#333;font-weight:normal;letter-spacing:0px;-webkit-text-stroke:0.25px #333;transform:scaleX(1.0626);transform-origin:0 0;">Quotes:</div>
<div style="left:906.41px;top:1161.3px;font-family:'Liberation Sans', sans-serif;font-size:27px;line-height:27px;color:#000;font-weight:normal;letter-spacing:0px;-webkit-text-stroke:0.25px #000;transform:scaleX(1.0458);transform-origin:0 0;">Locale:</div>
<div style="left:1041px;top:1048px;width:209px;height:35px;background:#fff;box-sizing:border-box;border:2px solid #777"></div>
<div style="left:1054.5px;top:1053.1px;font-family:'Liberation Sans', sans-serif;font-size:24px;line-height:24px;color:#000;font-weight:normal;letter-spacing:0px;-webkit-text-stroke:0.25px #000;">Comma</div>
<svg style="left:1219px;top:1058.5px" width="22" height="14" viewBox="0 0 22 14"><path d="M2 2 L11 11 L20 2" fill="none" stroke="#111" stroke-width="1.9"/></svg>
<div style="left:1041px;top:1102px;width:209px;height:34px;background:#fafafa;box-sizing:border-box;border:2px solid #dcdcdc"></div>
<div style="left:1054.5px;top:1107.5px;font-family:'Liberation Sans', sans-serif;font-size:24px;line-height:24px;color:#a8a8a8;font-weight:normal;letter-spacing:0px;-webkit-text-stroke:0.25px #a8a8a8;">Default</div>
<svg style="left:1219px;top:1112.0px" width="22" height="14" viewBox="0 0 22 14"><path d="M2 2 L11 11 L20 2" fill="none" stroke="#b8b8b8" stroke-width="1.9"/></svg>
<div style="left:1041px;top:1151px;width:209px;height:47px;box-sizing:border-box;border:2px solid #7a7a7a;border-radius:6px;background:#ededed"></div>
<div style="left:1069.55px;top:1160.2px;font-family:'Liberation Sans', sans-serif;font-size:28px;line-height:28px;color:#000;font-weight:normal;letter-spacing:0px;-webkit-text-stroke:0.25px #000;transform:scaleX(1.0472);transform-origin:0 0;">Configure...</div>
<div style="left:1284.98px;top:1052.6px;font-family:'Liberation Sans', sans-serif;font-size:27px;line-height:27px;color:#333;font-weight:normal;letter-spacing:0px;-webkit-text-stroke:0.25px #333;transform:scaleX(1.0086);transform-origin:0 0;">Escape:</div>
<div style="left:1285.92px;top:1107.0px;font-family:'Liberation Sans', sans-serif;font-size:27px;line-height:27px;color:#333;font-weight:normal;letter-spacing:0px;-webkit-text-stroke:0.25px #333;transform:scaleX(1.0826);transform-origin:0 0;">Comment:</div>
<div style="left:1284.84px;top:1160.8px;font-family:'Liberation Sans', sans-serif;font-size:27px;line-height:27px;color:#333;font-weight:normal;letter-spacing:0px;-webkit-text-stroke:0.25px #333;transform:scaleX(1.0805);transform-origin:0 0;">NA:</div>
<div style="left:1428px;top:1049px;width:209px;height:34px;background:#fafafa;box-sizing:border-box;border:2px solid #dcdcdc"></div>
<div style="left:1441.5px;top:1055.1px;font-family:'Liberation Sans', sans-serif;font-size:24px;line-height:24px;color:#a8a8a8;font-weight:normal;letter-spacing:0px;-webkit-text-stroke:0.25px #a8a8a8;">None</div>
<svg style="left:1606px;top:1059.0px" width="22" height="14" viewBox="0 0 22 14"><path d="M2 2 L11 11 L20 2" fill="none" stroke="#b8b8b8" stroke-width="1.9"/></svg>
<div style="left:1428px;top:1102px;width:209px;height:34px;background:#fff;box-sizing:border-box;border:2px solid #777"></div>
<div style="left:1441.5px;top:1107.6px;font-family:'Liberation Sans', sans-serif;font-size:24px;line-height:24px;color:#000;font-weight:normal;letter-spacing:0px;-webkit-text-stroke:0.25px #000;">Default</div>
<svg style="left:1606px;top:1112.0px" width="22" height="14" viewBox="0 0 22 14"><path d="M2 2 L11 11 L20 2" fill="none" stroke="#111" stroke-width="1.9"/></svg>
<div style="left:1428px;top:1157px;width:209px;height:34px;background:#fff;box-sizing:border-box;border:2px solid #777"></div>
<div style="left:1441.5px;top:1162.6px;font-family:'Liberation Sans', sans-serif;font-size:24px;line-height:24px;color:#000;font-weight:normal;letter-spacing:0px;-webkit-text-stroke:0.25px #000;">Default</div>
<svg style="left:1606px;top:1167.0px" width="22" height="14" viewBox="0 0 22 14"><path d="M2 2 L11 11 L20 2" fill="none" stroke="#111" stroke-width="1.9"/></svg>
<div style="left:1690.94px;top:973.2px;font-family:'Liberation Sans', sans-serif;font-size:26px;line-height:26px;color:#000;font-weight:normal;letter-spacing:0px;-webkit-text-stroke:0.25px #000;transform:scaleX(1.0645);transform-origin:0 0;">Code Preview:</div>
<svg style="left:2400px;top:958px" width="36" height="40" viewBox="0 0 36 40"><rect x="4.8" y="7.8" width="26.1" height="27.8" rx="2.5" fill="#fff" stroke="#8a5c22" stroke-width="2"/><path d="M10.2 7.2 L26 7.2 L24.8 10 Q24.4 11 23.4 11 L12.8 11 Q11.8 11 11.4 10 Z" fill="#e0b445"/><path d="M13.7 7.4 L13.7 4.6 Q13.7 2.2 16.1 2.2 L19.7 2.2 Q22.1 2.2 22.1 4.6 L22.1 7.4 Z" fill="#e0b445"/><circle cx="18" cy="5.5" r="1.1" fill="#f4e6b8"/></svg>
<div style="left:1691px;top:1013px;width:753px;height:246px;background:#fff;box-sizing:border-box;border:2px solid #a2a2a2"></div>
<div style="left:1700px;top:1022px;width:735px;height:228px;background:#262a31"></div>
<div style="left:2408px;top:1022px;width:27px;height:228px;background:#22262c"></div>
<div style="left:1709px;top:1022px;width:3.5px;height:46px;background:#4f4c36"></div>
<div style="left:1708px;top:1029.9px;font-family:'Liberation Mono', monospace;font-size:35px;line-height:35px;color:#eee2cf;font-weight:normal;letter-spacing:0px;transform:scaleX(0.928);transform-origin:0 0;white-space:pre;-webkit-text-stroke:0.45px currentColor;"><span style="color:#5db33c">library</span><span style="color:#e48fb0">(</span><span style="color:#eee2cf">readr</span><span style="color:#e48fb0">)</span></div>
<div style="left:1708px;top:1076.4px;font-family:'Liberation Mono', monospace;font-size:35px;line-height:35px;color:#eee2cf;font-weight:normal;letter-spacing:0px;transform:scaleX(0.928);transform-origin:0 0;white-space:pre;-webkit-text-stroke:0.45px currentColor;"><span style="color:#eee2cf">penguin_rawdata</span> <span style="color:#c9c9c9">&lt;-</span> <span style="color:#d9656a">read_csv</span><span style="color:#e48fb0">(</span><span style="color:#e8c45e">"~</span></div>
<div style="left:1708px;top:1122.9px;font-family:'Liberation Mono', monospace;font-size:35px;line-height:35px;color:#eee2cf;font-weight:normal;letter-spacing:0px;transform:scaleX(0.928);transform-origin:0 0;white-space:pre;-webkit-text-stroke:0.45px currentColor;"><span style="color:#e8c45e">/Documents/github/R4Psy/data</span></div>
<div style="left:1708px;top:1169.4px;font-family:'Liberation Mono', monospace;font-size:35px;line-height:35px;color:#eee2cf;font-weight:normal;letter-spacing:0px;transform:scaleX(0.928);transform-origin:0 0;white-space:pre;-webkit-text-stroke:0.45px currentColor;"><span style="color:#e8c45e">/penguin/penguin_rawdata.csv"</span><span style="color:#e48fb0">)</span></div>
<div style="left:1708px;top:1215.9px;font-family:'Liberation Mono', monospace;font-size:35px;line-height:35px;color:#eee2cf;font-weight:normal;letter-spacing:0px;transform:scaleX(0.928);transform-origin:0 0;white-space:pre;-webkit-text-stroke:0.45px currentColor;"><span style="color:#d9656a">View</span><span style="color:#e48fb0">(</span><span style="color:#eee2cf">penguin_rawdata</span><span style="color:#e48fb0">)</span></div>
<div style="left:29px;top:1354px;width:30px;height:30px;box-sizing:border-box;border:2px solid #b9bec4;border-radius:50%;background:#e9ebed"></div>
<div style="left:38.2px;top:1357.8px;font-family:'Liberation Sans', sans-serif;font-size:22px;line-height:22px;color:#333a44;font-weight:normal;letter-spacing:0px;">?</div>
<div style="left:70.44px;top:1353.5px;font-family:'Liberation Sans', sans-serif;font-size:28px;line-height:28px;color:#0a0aa0;font-weight:normal;letter-spacing:0px;-webkit-text-stroke:0.25px #0a0aa0;transform:scaleX(1.0302);transform-origin:0 0;">Reading rectangular data using readr</div>
<div style="left:2091.5px;top:1351.5px;width:170.0px;height:55.5px;box-sizing:border-box;border:2px solid #b3b3b3;border-radius:14px;background:#f7f7f7;box-shadow:0 1px 1px rgba(0,0,0,0.08)"></div>
<div style="left:2129.99px;top:1366.7px;font-family:'Liberation Sans', sans-serif;font-size:28px;line-height:28px;color:#2a2a2a;font-weight:bold;letter-spacing:0px;transform:scaleX(1.0529);transform-origin:0 0;">Import</div>
<div style="left:2280.5px;top:1351.5px;width:170.0px;height:55.5px;box-sizing:border-box;border:2px solid #b3b3b3;border-radius:14px;background:#f7f7f7;box-shadow:0 1px 1px rgba(0,0,0,0.08)"></div>
<div style="left:2322.53px;top:1366.7px;font-family:'Liberation Sans', sans-serif;font-size:28px;line-height:28px;color:#000;font-weight:normal;letter-spacing:0px;-webkit-text-stroke:0.25px #000;transform:scaleX(0.9659);transform-origin:0 0;">Cancel</div>
<div style="left:7px;top:48.6px;width:992.5px;height:119.6px;border:18px solid #e8402a;border-radius:18px;"></div>
<div style="left:1px;top:927.5px;width:1618px;height:316.0px;border:18px solid #e8402a;border-radius:18px;"></div>
<div style="left:1670.5px;top:909px;width:762.0px;height:352.5px;border:18px solid #e8402a;border-radius:18px;"></div>
</body></html>
